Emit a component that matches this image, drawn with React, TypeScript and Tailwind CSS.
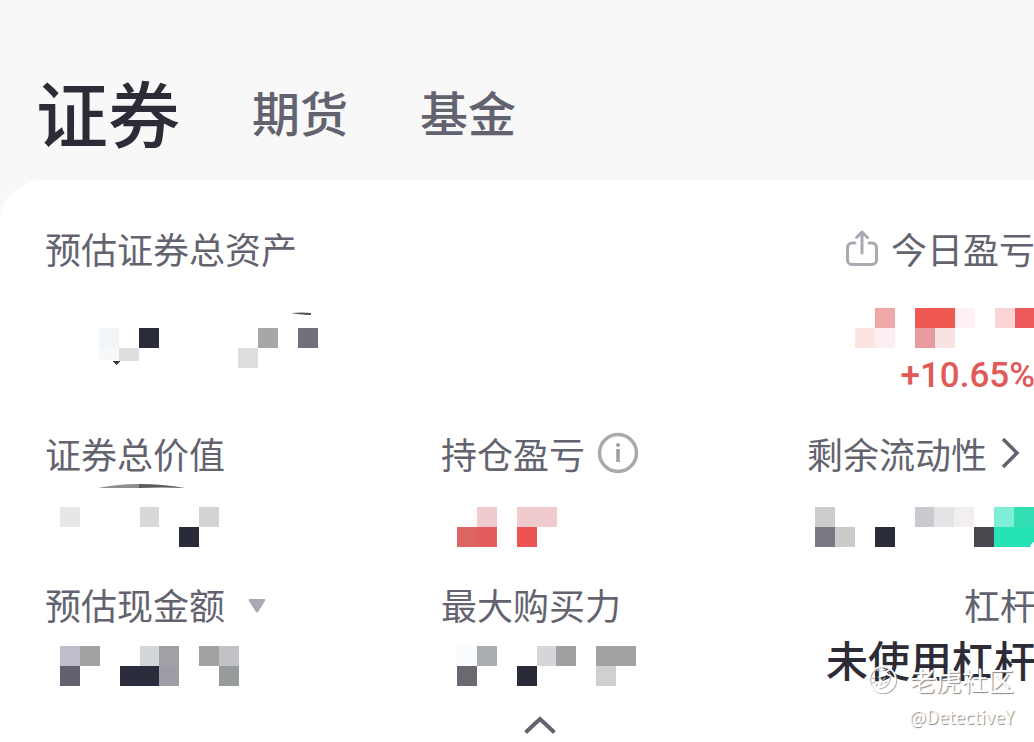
import type { ReactNode } from 'react';
import clsx from 'clsx';

// [column, row, width, height, colour], all in mosaic cells
type Cell = [number, number, number, number, string];

const TOTAL_ASSETS: Cell[] = [
  [2, 0, 1, 1, '#f1f5f8'],
  [2, 1, 1, 0.6, '#f7f8f9'],
  [3, 1, 1, 0.65, '#dedede'],
  [4, 0, 1, 1, '#2a2b3b'],
  [9, 1, 1, 1, '#dedede'],
  [10, 0, 1, 1, '#a6a8a7'],
  [12, 0, 1, 1, '#706f7c'],
];

const TODAY_PROFIT: Cell[] = [
  [0, 1, 1, 1, '#fde3e2'],
  [1, 0, 1, 1, '#f0a8a7'],
  [1, 1, 1, 1, '#fdeff1'],
  [3, 0, 2, 1, '#ef5951'],
  [3, 1, 1, 1, '#e79ba0'],
  [4, 1, 1, 1, '#f7e4e2'],
  [5, 0, 1, 1, '#fdf1f5'],
  [7, 0, 1, 1, '#fbd5d5'],
  [8, 0, 1, 1, '#ee5a5c'],
];

const TOTAL_VALUE: Cell[] = [
  [0, 0, 1, 1, '#e7e7e7'],
  [4, 0, 1, 1, '#d8d8d8'],
  [6, 1, 1, 1, '#2a2b38'],
  [7, 0, 1, 1, '#d3d3d3'],
];

const POSITION_PROFIT: Cell[] = [
  [0, 1, 1, 1, '#dc6463'],
  [1, 0, 1, 1, '#f0cbcd'],
  [1, 1, 1, 1, '#e25d5c'],
  [3, 0, 2, 1, '#f0cbcd'],
  [3, 1, 1, 1, '#ed5354'],
];

const LIQUIDITY: Cell[] = [
  [0, 0, 1, 1, '#cdcdcd'],
  [0, 1, 1, 1, '#7b7883'],
  [1, 1, 1, 1, '#cbcbcb'],
  [3, 1, 1, 1, '#2a2c37'],
  [5, 0, 1, 1, '#cacad1'],
  [6, 0, 1, 1, '#e4e3e6'],
  [7, 0, 1, 1, '#f3eef0'],
  [8, 1, 1, 1, '#4a484f'],
  [9, 0, 1, 1, '#7eefd7'],
  [10, 0, 1, 1, '#35dfb6'],
  [9, 1, 2, 1, '#26e3b5'],
];

const CASH: Cell[] = [
  [0, 0, 1, 1, '#bfbdc9'],
  [1, 0, 1, 1, '#a2a2a1'],
  [0, 1, 1, 1, '#63616e'],
  [3, 1, 2, 1, '#2a2b3b'],
  [4, 0, 1, 1, '#d3d7d8'],
  [5, 0, 1, 1, '#a29fa5'],
  [5, 1, 1, 1, '#9e9da6'],
  [7, 0, 1, 1, '#a2a2a2'],
  [8, 0, 1, 1, '#c1c1c7'],
  [8, 1, 1, 1, '#979b9b'],
];

const BUYING_POWER: Cell[] = [
  [0, 0, 1, 1, '#f8fcff'],
  [1, 0, 1, 1, '#a9adb0'],
  [0, 1, 1, 1, '#6a6870'],
  [3, 1, 1, 1, '#2a2b38'],
  [4, 0, 1, 1, '#d6d6da'],
  [5, 0, 1, 1, '#a0a0a3'],
  [7, 0, 2, 1, '#a2a3a3'],
  [7, 1, 1, 1, '#ced1d0'],
];

/** Hidden amount, drawn as a coarse mosaic two cells high. */
function Mosaic({ cells, className, children }: { cells: Cell[]; className: string; children?: ReactNode }) {
  const cols = Math.max(...cells.map(([x, , w]) => x + w));
  return (
    <svg
      aria-hidden="true"
      viewBox={`0 0 ${cols} 2`}
      preserveAspectRatio="none"
      shapeRendering="crispEdges"
      className={clsx('h-10 shrink-0', className)}
    >
      {cells.map(([x, y, w, h, fill]) => (
        <rect key={`${x}-${y}`} x={x} y={y} width={w} height={h} fill={fill} />
      ))}
      {children}
    </svg>
  );
}

function Label({ children }: { children: ReactNode }) {
  return <div className="flex h-12 items-center pb-1 text-4xl/11 whitespace-nowrap">{children}</div>;
}

function ShareIcon() {
  return (
    <svg viewBox="0 0 34 38" fill="none" stroke="#a9a9b2" strokeWidth="3" strokeLinecap="round" strokeLinejoin="round" className="h-[38px] w-[34px]">
      <path d="M10 14H7a4.500 4.500 0 0 0-4.500 4.500V31A4.500 4.500 0 0 0 7 35.500h20a4.500 4.500 0 0 0 4.500-4.500V18.500A4.500 4.500 0 0 0 27 14h-3" />
      <path d="M17 24V4M11.500 8.500 17 3l5.500 5.500" />
    </svg>
  );
}

function InfoIcon() {
  return (
    <svg viewBox="0 0 42 42" fill="none" className="size-[42px]">
      <circle cx="21" cy="21" r="18.500" stroke="#a9a9ae" strokeWidth="3.500" />
      <circle cx="21" cy="13" r="2" fill="#9d9da4" />
      <path d="M21 17v13" stroke="#9d9da4" strokeWidth="3.500" />
    </svg>
  );
}

function TigerIcon() {
  return (
    <svg viewBox="0 0 30 30" fill="none" strokeLinecap="round" className="size-[30px]">
      <circle cx="15.500" cy="15.500" r="13" stroke="#b0b0b0" strokeWidth="1.500" />
      <circle cx="14.500" cy="14.500" r="13" stroke="#fff" strokeWidth="1.500" />
      <g stroke="#b4b4b4" strokeWidth="1.200">
        <path d="M8 4q2 2 5 2t5-2M21 7q3 5 0 11-3 5-9 6" />
        <path d="m4 13 3 1M4 18l3-1M10 12l3 2M17 13l-2 2M8 21l2-2M13 20l1-2M17 18l2-1" />
      </g>
      <path d="m12 4 4 4 5-3M15 8l8 3" stroke="#fff" strokeWidth="1.500" />
    </svg>
  );
}

function Watermark() {
  return (
    <div className="pointer-events-none absolute right-5 bottom-2 flex flex-col items-end text-white [text-shadow:1px_1px_1px_#888]">
      <div className="flex items-center gap-3 text-[26px]/9">
        <TigerIcon />
        <span>老虎社区</span>
      </div>
      <span className="text-lg/9">@DetectiveY</span>
    </div>
  );
}

export default function App() {
  return (
    <div className="relative min-h-screen overflow-x-hidden bg-[#f8f8f8] font-['Noto_Sans_CJK_SC',sans-serif] text-[#63636f]">
      <nav className="flex h-[180px] items-center gap-[72px] pt-[42px] pl-9 text-5xl font-medium">
        <a href="#securities" aria-current="page" className="text-[72px]/[84px] text-[#2c2b36]">
          证券
        </a>
        <a href="#futures">期货</a>
        <a href="#funds">基金</a>
      </nav>

      <main className="rounded-tl-[44px] bg-white pt-[46px] pl-[45px]">
        <section className="flex justify-between">
          <div>
            <Label>预估证券总资产</Label>
            <div className="mt-9">
              <svg aria-hidden="true" viewBox="0 0 280 18" className="h-[18px] w-[280px]">
                <path d="M246 3q12-1 20 0v2q-8 0-20-2Z" fill="#55555b" />
              </svg>
              <Mosaic cells={TOTAL_ASSETS} className="ml-[14px] w-[259px]">
                <path d="M2.700 1.650h.4l-.2.200Z" fill="#3a3a3d" />
              </Mosaic>
            </div>
          </div>
          <div className="-mr-px flex flex-col items-end">
            <Label>
              <button type="button" aria-label="分享" className="mr-3">
                <ShareIcon />
              </button>
              今日盈亏
            </Label>
            <Mosaic cells={TODAY_PROFIT} className="mt-[34px] w-[180px]" />
            <p className="mt-1 font-[Roboto,sans-serif] text-[35px]/12 font-medium text-[#e05a57]">+10.65%</p>
          </div>
        </section>

        <section className="mt-[31px] grid grid-cols-[396fr_363fr_230fr]">
          <div>
            <Label>证券总价值</Label>
            <svg aria-hidden="true" viewBox="0 0 180 28" className="h-7 w-[180px]">
              <path d="M53 9Q72 5 94 5v4Z" fill="#8f8f93" />
              <path d="M94 5q24 0 46 4-23-1-46 0Z" fill="#5c5c60" />
            </svg>
            <Mosaic cells={TOTAL_VALUE} className="ml-[15px] w-[159px]" />
          </div>
          <div>
            <Label>
              持仓盈亏
              <button type="button" aria-label="说明" className="ml-3">
                <InfoIcon />
              </button>
            </Label>
            <Mosaic cells={POSITION_PROFIT} className="mt-7 ml-4 w-[100px]" />
          </div>
          <div className="flex flex-col items-end">
            <a href="#liquidity" className="mr-[11px] block">
              <Label>
                剩余流动性
                <svg viewBox="0 0 24 36" fill="none" stroke="#63636f" strokeWidth="3.500" className="ml-3 h-9 w-6">
                  <path d="m4 4 14 14L4 32" />
                </svg>
              </Label>
            </a>
            <Mosaic cells={LIQUIDITY} className="mt-7 w-[219px]">
              <path d="M11 2V1.750L10.750 2Z" fill="#fff" />
            </Mosaic>
          </div>
        </section>

        <section className="mt-[35px] grid grid-cols-[396fr_363fr_230fr]">
          <div>
            <Label>
              预估现金额
              <button type="button" aria-label="切换币种" className="mt-1 ml-[22px]">
                <svg viewBox="0 0 20 16" className="h-4 w-5">
                  <path d="M3 1h14q2 0 1 2l-7 11q-1 1-2 0L2 3Q1 1 3 1Z" fill="#a9a9b4" />
                </svg>
              </button>
            </Label>
            <Mosaic cells={CASH} className="mt-4 ml-[15px] w-[179px]" />
          </div>
          <div>
            <Label>最大购买力</Label>
            <Mosaic cells={BUYING_POWER} className="mt-4 ml-4 w-[179px]" />
          </div>
          <div className="-mr-0.5 flex flex-col items-end">
            <Label>杠杆</Label>
            <p className="mt-[5px] text-[42px]/12 font-medium whitespace-nowrap text-[#2c2b36]">未使用杠杆</p>
          </div>
        </section>

        <div className="flex justify-center pt-[29px] pb-[7px]">
          <button type="button" aria-label="收起">
            <svg viewBox="0 0 34 20" fill="none" stroke="#63636f" strokeWidth="4" className="h-5 w-[34px]">
              <path d="M2.500 17.500 17 4l14.500 13.500" />
            </svg>
          </button>
        </div>
      </main>

      <Watermark />
    </div>
  );
}
